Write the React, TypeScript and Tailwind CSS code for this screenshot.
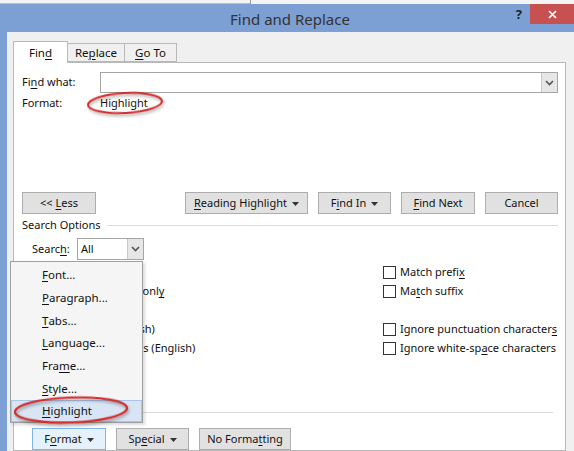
import React from "react";

// small helpers for the accelerator underline and the little glyphs
const U = ({ children }: { children: React.ReactNode }) => (
  <span className="underline underline-offset-2 decoration-1">{children}</span>
);

const Caret = () => (
  <svg width="7" height="4" viewBox="0 0 7 4" className="ml-[5px] mt-[1px]">
    <polygon points="0,0 7,0 3.5,4" fill="#333" />
  </svg>
);

const Chevron = () => (
  <svg width="9" height="6" viewBox="0 0 9 6">
    <path d="M1 1 L4.5 4.5 L8 1" fill="none" stroke="#555" strokeWidth="1.6" />
  </svg>
);

function Btn({ children, w, active }: { children: React.ReactNode; w: string; active?: boolean }) {
  return (
    <div
      className={
        "h-[22px] flex items-center justify-center whitespace-nowrap border " +
        w +
        (active ? " bg-[#e5f1fb] border-[#7eb4ea]" : " bg-[#e1e1e1] border-[#adadad]")
      }
    >
      {children}
    </div>
  );
}

function Check({ children }: { children: React.ReactNode }) {
  return (
    <div className="h-[19px] flex items-center whitespace-nowrap">
      <div className="w-[13px] h-[13px] shrink-0 border border-[#333] bg-white" />
      <span className="ml-[4px]">{children}</span>
    </div>
  );
}

const menuItems: React.ReactNode[] = [
  <><U>F</U>ont...</>,
  <><U>P</U>aragraph...</>,
  <><U>T</U>abs...</>,
  <><U>L</U>anguage...</>,
  <>Fra<U>m</U>e...</>,
  <><U>S</U>tyle...</>,
];

export default function App() {
  return (
    <div className="relative w-[574px] h-[451px] overflow-hidden flex flex-col bg-[#7da0d4] text-[11px] text-[#111] font-['Noto_Sans',sans-serif]">
      {/* strip of whatever is behind the window */}
      <div className="h-[4px] shrink-0 flex bg-[#f4f4f4]">
        <div className="w-[250px] border-b border-[#bdbdbd]" />
        <div className="w-[1px] bg-[#9a9a9a]" />
      </div>

      {/* title bar */}
      <div className="h-[28px] shrink-0 flex items-start relative">
        <div className="flex-1 text-center text-[15px] leading-[20px] pt-[5px] text-[#333] pl-[6px]">Find and Replace</div>
        <div className="absolute right-[52px] top-[1px] text-[13px] font-bold text-[#222]">?</div>
        <div className="absolute right-0 top-0 w-[44px] h-[20px] bg-[#c75050] flex items-center justify-center">
          <svg width="9" height="9" viewBox="0 0 9 9">
            <path d="M1 1 L8 8 M8 1 L1 8" stroke="white" strokeWidth="1.7" />
          </svg>
        </div>
      </div>

      {/* window body */}
      <div className="flex-1 ml-[7px] bg-[#f0f0f0] pt-[9px] pl-[6px] pr-[8px] flex flex-col">
        {/* tabs */}
        <div className="flex items-end h-[21px] relative z-10">
          <div className="w-[55px] h-[22px] -mb-[1px] bg-white border border-b-0 border-[#b9b9b9] flex items-center justify-center text-[11.5px]">
            Fin<U>d</U>
          </div>
          <div className="w-[57px] h-[19px] bg-[#f0f0f0] border border-l-0 border-[#b9b9b9] flex items-center justify-center text-[11.5px]">
            Re<U>p</U>lace
          </div>
          <div className="w-[52px] h-[19px] bg-[#f0f0f0] border border-l-0 border-[#b9b9b9] flex items-center justify-center text-[11.5px]">
            <U>G</U>o To
          </div>
        </div>

        {/* tab panel */}
        <div className="flex-1 bg-white border border-[#b9b9b9] pl-[8px] pr-[7px] pt-[9px] flex flex-col">
          <div className="flex items-center h-[21px]">
            <div className="w-[78px]">
              Fi<U>n</U>d what:
            </div>
            <div className="flex-1 h-[21px] border border-[#a5a5a5] flex justify-end">
              <div className="w-[16px] h-full bg-[#e6e6e6] border-l border-[#c9c9c9] flex items-center justify-center">
                <Chevron />
              </div>
            </div>
          </div>
          <div className="flex items-center h-[18px] mt-[1px]">
            <div className="w-[78px]">Format:</div>
            <div>Highlight</div>
          </div>

          {/* main buttons */}
          <div className="flex mt-[80px]">
            <Btn w="w-[74px]">
              &lt;&lt; <span className="ml-[3px]"><U>L</U>ess</span>
            </Btn>
            <div className="ml-auto flex gap-[10px]">
              <Btn w="w-[123px]">
                <U>R</U>eading Highlight <Caret />
              </Btn>
              <Btn w="w-[73px]">
                F<U>i</U>nd In <Caret />
              </Btn>
              <Btn w="w-[74px]">
                <U>F</U>ind Next
              </Btn>
              <Btn w="w-[73px]">Cancel</Btn>
            </div>
          </div>

          {/* search options */}
          <div className="flex items-center h-[16px] mt-[3px]">
            <span>Search Options</span>
            <div className="flex-1 h-[1px] bg-[#dcdcdc] ml-[6px]" />
          </div>
          <div className="flex items-center h-[22px] mt-[5px] pl-[10px]">
            <span className="w-[45px]">
              Searc<U>h</U>:
            </span>
            <div className="w-[67px] h-[22px] border border-[#a5a5a5] flex items-center">
              <span className="flex-1 pl-[3px]">All</span>
              <div className="w-[16px] h-full bg-[#e6e6e6] border-l border-[#c9c9c9] flex items-center justify-center">
                <Chevron />
              </div>
            </div>
          </div>

          <div className="grid grid-cols-[361px_1fr] mt-[3px]">
            <div className="flex flex-col pl-[10px]">
              <Check>Matc<U>h</U> case</Check>
              <Check>Find whole words onl<U>y</U></Check>
              <Check>Use wildcards</Check>
              <Check>Sounds li<U>k</U>e (English)</Check>
              <Check>Find all <U>w</U>ord forms (English)</Check>
            </div>
            <div className="flex flex-col">
              <Check>Match prefi<U>x</U></Check>
              <Check>Ma<U>t</U>ch suffix</Check>
              <div className="h-[19px]" />
              <Check>Ignore punctuation character<U>s</U></Check>
              <Check>Ignore white-sp<U>a</U>ce characters</Check>
            </div>
          </div>

          <div className="h-[1px] bg-[#dcdcdc] mt-[54px] mr-[5px]" />

          <div className="flex gap-[10px] mt-[15px] pl-[10px]">
            <Btn w="w-[74px]" active>
              F<U>o</U>rmat <Caret />
            </Btn>
            <Btn w="w-[73px]">
              Sp<U>e</U>cial <Caret />
            </Btn>
            <Btn w="w-[92px]">
              No Forma<U>t</U>ting
            </Btn>
          </div>
        </div>
      </div>

      {/* open Format menu */}
      <div className="absolute left-[10px] top-[261px] w-[133px] h-[162px] bg-[#f5f5f5] border border-[#a0a0a0] shadow-[2px_2px_3px_rgba(0,0,0,0.15)] pt-[1px] flex flex-col text-[11.5px]">
        {menuItems.map((item, i) => (
          <div key={i} className="h-[23px] flex items-center pl-[31px]">
            {item}
          </div>
        ))}
        <div className="h-[22px] flex items-center pl-[30px] bg-[#d9e5f4] border border-[#a9c5ea]">
          <U>H</U>ighlight
        </div>
      </div>

      {/* red hand-drawn ellipses */}
      <svg className="absolute inset-0 pointer-events-none" width="574" height="451" viewBox="0 0 574 451">
        <g style={{ filter: "drop-shadow(1px 2px 1.5px rgba(0,0,0,0.35))" }}>
          <ellipse cx="125" cy="103" rx="37" ry="10" fill="none" stroke="#d42a2a" strokeWidth="2" transform="rotate(-3 125 103)" />
          <ellipse cx="71" cy="410" rx="56" ry="12.5" fill="none" stroke="#d42a2a" strokeWidth="2.2" transform="rotate(-2 71 410)" />
        </g>
      </svg>
    </div>
  );
}
